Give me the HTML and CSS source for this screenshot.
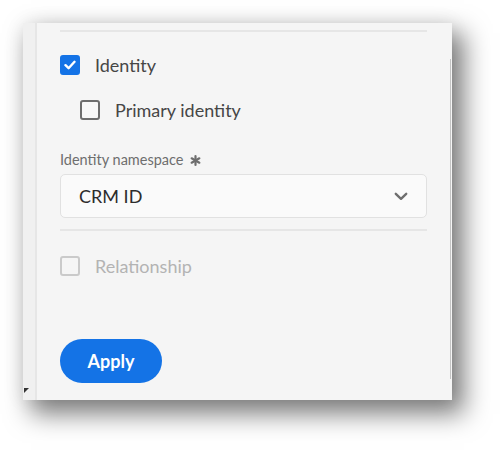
FILE: index.html
```html
<!DOCTYPE html>
<html>
<head>
<meta charset="utf-8">
<link rel="stylesheet" href="styles.css">
</head>
<body>
<div class="panel">
  <div class="rail"></div>
  <div class="content">
    <div class="divider first"></div>
    <label class="check-row identity-row">
      <span class="box checked">
        <svg width="12" height="10" viewBox="0 0 12 10"><path d="M1.5 5.2 L4.6 8.2 L10.5 1.8" fill="none" stroke="#fff" stroke-width="2.4" stroke-linecap="round" stroke-linejoin="round"/></svg>
      </span>
      <span class="check-text">Identity</span>
    </label>
    <label class="check-row primary-row">
      <span class="box"></span>
      <span class="check-text">Primary identity</span>
    </label>
    <div class="field-label">Identity namespace
      <svg class="req" width="11" height="11" viewBox="0 0 12 12"><g stroke="#6e6e6e" stroke-width="2.4" stroke-linecap="round"><path d="M6 1.2 V10.8"/><path d="M1.8 3.6 L10.2 8.4"/><path d="M1.8 8.4 L10.2 3.6"/></g></svg>
    </div>
    <div class="select">
      <span class="select-value">CRM ID</span>
      <svg width="14" height="9" viewBox="0 0 14 9"><path d="M1.8 1.8 L7 6.8 L12.2 1.8" fill="none" stroke="#6e6e6e" stroke-width="2.4" stroke-linecap="round" stroke-linejoin="round"/></svg>
    </div>
    <div class="divider second"></div>
    <label class="check-row rel-row disabled">
      <span class="box"></span>
      <span class="check-text">Relationship</span>
    </label>
    <button class="apply">Apply</button>
  </div>
  <div class="scroll-line"></div>
  <div class="grip"></div>
</div>
</body>
</html>
```

FILE: styles.css
```css
html, body {
  margin: 0;
  padding: 0;
  background: #ffffff;
}
body {
  width: 504px;
  height: 454px;
  overflow: hidden;
  font-family: Lato, "Noto Sans", sans-serif;
}
.panel {
  position: relative;
  margin: 23px 0 0 23px;
  width: 429px;
  height: 377px;
  background: #f5f5f5;
  display: flex;
  box-shadow: 0 0 20px rgba(0, 0, 0, 0.07), 10px 12px 24px 2px rgba(0, 0, 0, 0.5);
}
.rail {
  width: 12px;
  background: #f0f0f0;
  border-right: 2px solid #e6e6e6;
  flex: none;
}
.content {
  flex: 1;
  padding: 0 25px 0 23px;
  display: flex;
  flex-direction: column;
  align-items: flex-start;
}
.divider {
  align-self: stretch;
  height: 2px;
  background: #e6e6e6;
}
.divider.first { margin-top: 7px; }
.divider.second { margin-top: 11px; }
.check-row {
  display: flex;
  align-items: center;
  height: 20px;
}
.identity-row { margin-top: 23px; }
.primary-row { margin-top: 25px; margin-left: 20px; }
.rel-row { margin-top: 25px; }
.box {
  box-sizing: border-box;
  width: 20px;
  height: 20px;
  border: 2px solid #6e6e6e;
  border-radius: 3px;
  background: #f8f8f8;
  display: flex;
  align-items: center;
  justify-content: center;
  flex: none;
}
.box.checked {
  background: #1473e6;
  border-color: #1473e6;
}
.check-text {
  margin-left: 15px;
  font-size: 18px;
  line-height: 20px;
  color: #464646;
}
.disabled .box { border-color: #cacaca; background: #f5f5f5; }
.disabled .check-text { color: #b3b3b3; }
.field-label {
  margin-top: 31px;
  font-size: 14.5px;
  line-height: 18px;
  color: #6e6e6e;
  display: flex;
  align-items: center;
}
.req { margin-left: 6px; }
.select {
  margin-top: 5px;
  align-self: stretch;
  box-sizing: border-box;
  height: 44px;
  background: #fafafa;
  border: 1px solid #e1e1e1;
  border-radius: 5px;
  display: flex;
  align-items: center;
  justify-content: space-between;
  padding: 0 18px 0 18px;
}
.select-value {
  font-size: 18px;
  color: #2c2c2c;
}
.apply {
  margin-top: 63px;
  height: 44px;
  width: 102px;
  border: none;
  border-radius: 22px;
  background: #1473e6;
  color: #ffffff;
  font-family: Lato, "Noto Sans", sans-serif;
  font-weight: 700;
  font-size: 18px;
  padding: 0;
}
.scroll-line {
  position: absolute;
  right: 1px;
  top: 36px;
  width: 1px;
  height: 320px;
  background: #c4c4c4;
}
.grip {
  position: absolute;
  left: 1px;
  top: 365px;
  width: 0;
  height: 0;
  border-top: 5px solid #333333;
  border-right: 5px solid transparent;
}
```
